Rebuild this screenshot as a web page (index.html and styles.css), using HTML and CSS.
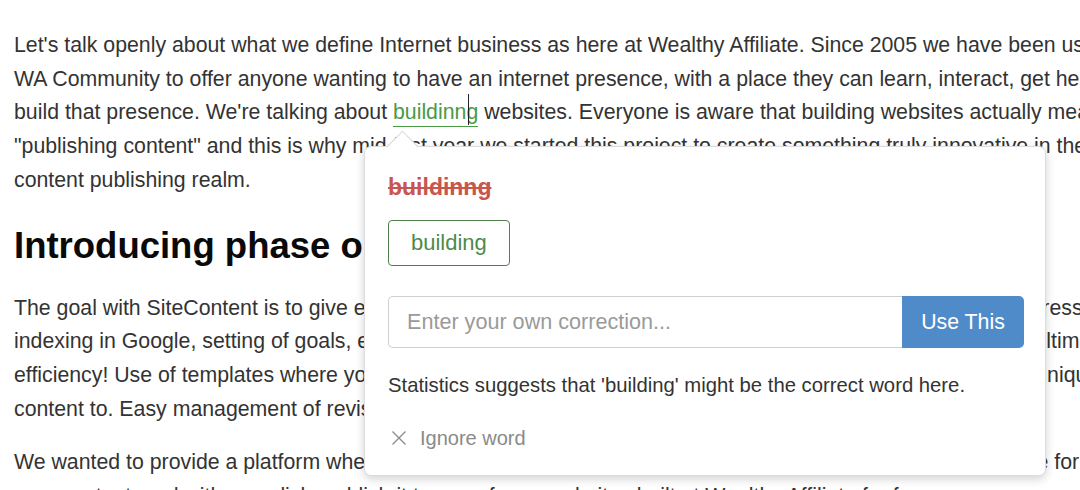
FILE: index.html
```html
<!DOCTYPE html>
<html>
<head>
<meta charset="utf-8">
<link rel="stylesheet" href="styles.css">
</head>
<body>
<div class="page">
  <p class="para">Let's talk openly about what we define Internet business as here at Wealthy Affiliate. Since 2005 we have been using the<br>WA Community to offer anyone wanting to have an internet presence, with a place they can learn, interact, get help and<br>build that presence. We're talking about <span class="miss">buildinng<span class="caret"></span></span> websites. Everyone is aware that building websites actually means<br>"publishing content" and this is why mid-last year we started this project to create something truly innovative in the<br>content publishing realm.</p>
  <h1 class="heading">Introducing phase one of SiteContent</h1>
  <p class="para">The goal with SiteContent is to give everyone a single place to create content, with keyword research, WordPress<br>indexing in Google, setting of goals, easy publishing, spell checking, grammar checking plus so much more, ultimately<br>efficiency! Use of templates where you can create a structure and layout, that you can reuse for all new plus unique<br>content to. Easy management of revisions and drafts of your work.</p>
  <p class="para">We wanted to provide a platform where you can research, write, edit and publish the new content in one place for<br>your content, and with one click, publish it to any of your websites built at Wealthy Affiliate for free.</p>

  <div class="popover">
    <div class="arrow"></div>
    <div class="wrong">buildinng</div>
    <button class="suggest">building</button>
    <div class="custom">
      <input class="custom-input" type="text" placeholder="Enter your own correction...">
      <button class="use">Use This</button>
    </div>
    <p class="note">Statistics suggests that 'building' might be the correct word here.</p>
    <div class="ignore">
      <svg class="ignore-icon" width="16" height="16" viewBox="0 0 16 16"><path d="M1.5 1.5 L14.5 14.5 M14.5 1.5 L1.5 14.5" stroke="#8a8a8a" stroke-width="1.3" fill="none"/></svg>
      <span>Ignore word</span>
    </div>
  </div>
</div>
</body>
</html>
```
FILE: styles.css
```css
html, body {
  margin: 0;
  padding: 0;
  background: #fff;
  overflow: hidden;
  width: 1080px;
  height: 490px;
}
.page {
  position: relative;
  padding: 29px 0 0 14px;
  font-family: "Liberation Sans", Arial, sans-serif;
  color: #333;
}
.para {
  margin: 0 0 20px;
  font-size: 21.3px;
  line-height: 33.7px;
  white-space: nowrap;
}
.heading {
  margin: 27px 0 25px;
  font-size: 36.5px;
  line-height: 42px;
  font-weight: bold;
  color: #0a0a0a;
  white-space: nowrap;
}
.miss {
  position: relative;
  display: inline-block;
  line-height: 27px;
  color: #4a9a44;
  border-bottom: 1.5px solid #4a9a44;
}
.caret {
  position: absolute;
  left: 75px;
  top: -5px;
  width: 1px;
  height: 31px;
  background: #222;
}
.popover {
  position: absolute;
  left: 364px;
  top: 146px;
  width: 682px;
  height: 330px;
  box-sizing: border-box;
  padding: 28px 23px 0;
  background: #fff;
  border: 1px solid #dcdcdc;
  border-radius: 7px;
  box-shadow: 0 3px 10px rgba(0,0,0,0.18);
  display: flex;
  flex-direction: column;
  align-items: flex-start;
}
.arrow {
  position: absolute;
  left: 27px;
  top: -12px;
  width: 20px;
  height: 20px;
  background: #fff;
  border-left: 1px solid #d6d6d6;
  border-top: 1px solid #d6d6d6;
  transform: rotate(45deg);
}
.wrong {
  font-size: 23px;
  font-weight: bold;
  color: #c8554e;
  text-decoration: line-through;
  line-height: 28px;
  margin-top: -2px;
}
.suggest {
  margin-top: 19px;
  height: 46px;
  padding: 0 22px;
  font-family: inherit;
  font-size: 22px;
  color: #4e8a4a;
  background: #fff;
  border: 1.5px solid #4f7f4c;
  border-radius: 4px;
}
.custom {
  margin-top: 30px;
  display: flex;
  width: 636px;
  height: 52px;
}
.custom-input {
  flex: 1;
  box-sizing: border-box;
  height: 52px;
  padding: 0 18px;
  font-family: inherit;
  font-size: 21.6px;
  color: #333;
  border: 1px solid #cfcfcf;
  border-right: none;
  border-radius: 5px 0 0 5px;
  outline: none;
}
.custom-input::placeholder {
  color: #9a9a9a;
}
.use {
  width: 122px;
  height: 52px;
  font-family: inherit;
  font-size: 21.3px;
  color: #fff;
  background: #4f8bc9;
  border: none;
  border-radius: 0 5px 5px 0;
}
.note {
  margin: 24px 0 0;
  font-size: 20.3px;
  line-height: 26px;
  color: #333;
}
.ignore {
  margin-top: 27px;
  display: flex;
  align-items: center;
  gap: 13px;
  font-size: 20px;
  line-height: 26px;
  color: #8a8a8a;
  padding-left: 3px;
}
```
